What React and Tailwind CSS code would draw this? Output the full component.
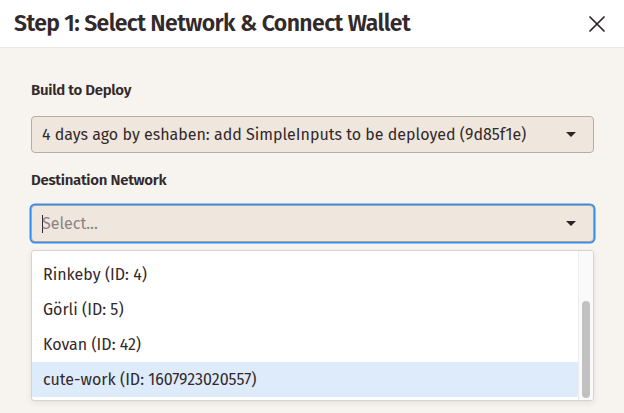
import { X } from 'lucide-react';

const networks = [
  { name: 'Rinkeby', id: '4' },
  { name: 'Görli', id: '5' },
  { name: 'Kovan', id: '42' },
  { name: 'cute-work', id: '1607923020557', active: true },
];

const Caret = () => (
  <svg width="10" height="5" viewBox="0 0 10 5" className="flex-shrink-0">
    <path d="M0 0h10L5 5z" fill="#2e2427" />
  </svg>
);

const App = () => {
  return (
    <div className="w-[624px] h-[413px] overflow-hidden bg-[#f7f4f0] text-[#33292b] font-['Fira_Sans','Noto_Sans',sans-serif]">
      <div className="h-[48px] bg-white border-b border-[#ece8e3] flex items-center justify-between pl-[14px] pr-[13px]">
        <h2 className="text-[23px] font-semibold tracking-[-0.6px] leading-none">
          Step 1: Select Network &amp; Connect Wallet
        </h2>
        <X className="w-[28px] h-[28px] text-[#2e2427]" strokeWidth={1.5} />
      </div>

      <div className="pt-[32px] pl-[31px] pr-[30px]">
        <label className="block text-[15px] font-semibold leading-[20px] tracking-[-0.3px]">Build to Deploy</label>
        <div className="mt-[16px] h-[37px] rounded-[4px] border border-[#b4aeab] bg-[#efe6dd] flex items-center justify-between pl-[10px] pr-[17px]">
          <span className="text-[16px]">
            4 days ago by eshaben: add SimpleInputs to be deployed (9d85f1e)
          </span>
          <Caret />
        </div>

        <label className="block mt-[17px] text-[15px] font-semibold leading-[20px] tracking-[-0.3px]">Destination Network</label>
        <div className="mt-[15px] h-[37px] rounded-[4px] border border-[#a9a4a2] bg-[#efe6dd] shadow-[0_0_0_1.5px_#2f8ff3] flex items-center justify-between pl-[10px] pr-[17px]">
          <span className="flex items-center text-[16px] text-[#8c8283]">
            <span className="w-px h-[18px] bg-[#33292b] mr-[-1px]" />
            Select...
          </span>
          <Caret />
        </div>

        <div className="relative mt-[8px] h-[151px] rounded-[3px] border border-[#d6d3d0] bg-white shadow-[0_2px_6px_rgba(0,0,0,0.08)] overflow-hidden flex">
          <ul className="flex-1 pt-[6px] pb-[3px]">
            {networks.map((n) => (
              <li
                key={n.id}
                className={`h-[35px] flex items-center pl-[11px] text-[16px] ${n.active ? 'bg-[#deebfb]' : ''}`}
              >
                {n.name} (ID: {n.id})
              </li>
            ))}
          </ul>
          <div className="relative w-[15px] bg-[#fafafa] border-l border-[#ececec]">
            <div className="absolute left-[3px] top-[50px] w-[8px] h-[97px] rounded-full bg-[#c1c1c1]" />
          </div>
        </div>
      </div>
    </div>
  );
};

export default App;
